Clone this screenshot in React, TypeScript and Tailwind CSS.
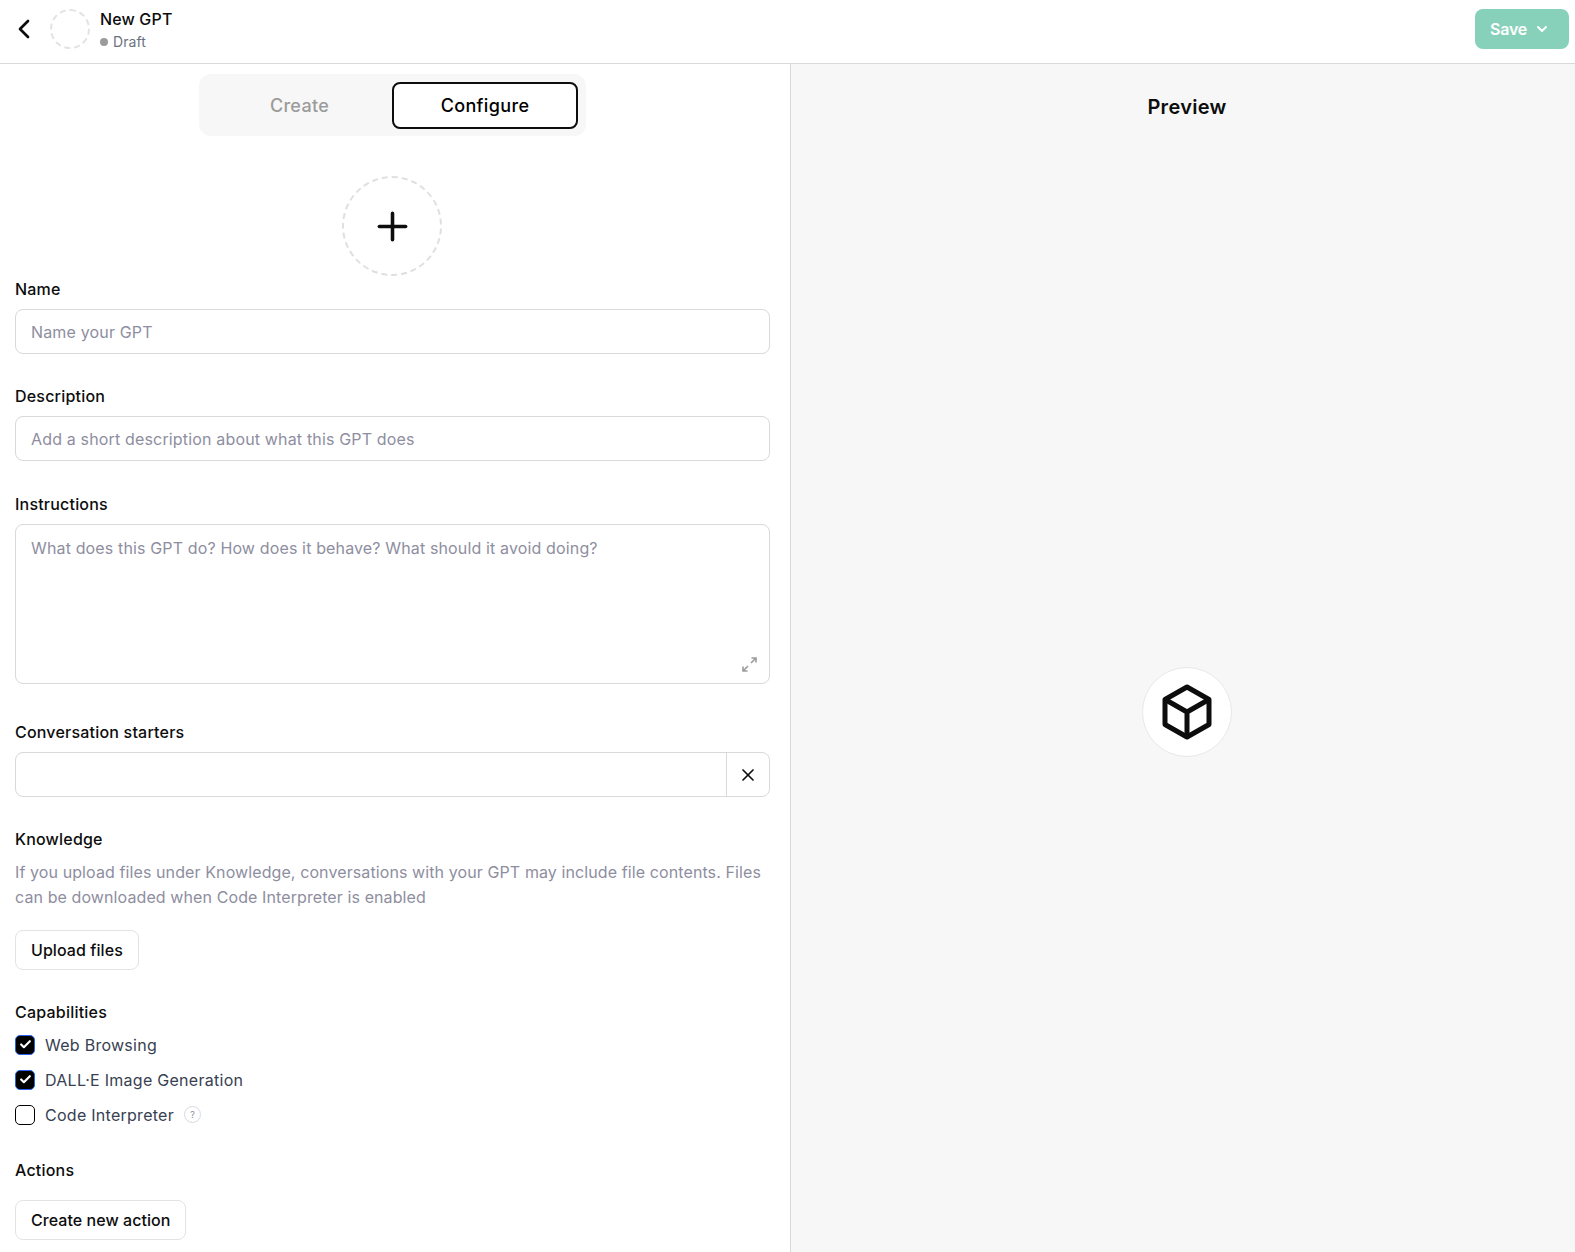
import React from 'react';
import { ChevronLeft, ChevronDown, Plus, X, Check } from 'lucide-react';

const font = "font-['Inter','Liberation_Sans',sans-serif]";

function Label({ children }: { children: React.ReactNode }) {
  return <div className="text-[16px] leading-[24px] font-medium tracking-[0.2px] text-[#0d0d0d] mb-2">{children}</div>;
}

function TextBox({ placeholder }: { placeholder: string }) {
  return (
    <div className="h-[45px] rounded-lg border border-[#d9d9d9] px-[15px] flex items-center text-[16px] tracking-[0.16px] text-[#8e8ea0]">
      {placeholder}
    </div>
  );
}

function Capability({ label, checked, help }: { label: string; checked: boolean; help?: boolean }) {
  return (
    <div className="h-[35px] flex items-center">
      {checked ? (
        <span className="w-5 h-5 rounded-[5px] bg-black border border-[#2563eb] flex items-center justify-center">
          <Check size={13} color="#ffffff" strokeWidth={4} />
        </span>
      ) : (
        <span className="w-5 h-5 rounded-[5px] bg-white border border-black" />
      )}
      <span className="ml-[10px] text-[16px] tracking-[0.27px] text-[#374151]">{label}</span>
      {help && (
        <span className="ml-[10px] w-[17px] h-[17px] rounded-full border border-[#d9d9e3] flex items-center justify-center text-[9px] text-[#8e8ea0]">
          ?
        </span>
      )}
    </div>
  );
}

export default function App() {
  return (
    <div className={`${font} w-[1575px] h-[1252px] overflow-hidden flex flex-col bg-white`}>
      <header className="h-[64px] shrink-0 border-b border-[#d9d9d9] flex items-center pl-[8px] pr-[6px] pb-[6px]">
        <ChevronLeft size={32} strokeWidth={2} color="#0d0d0d" />
        <div className="ml-[10px] w-10 h-10 rounded-full border-2 border-dashed border-[#e3e3e3]" />
        <div className="ml-[10px] pt-[4px]">
          <div className="text-[16px] leading-[20px] font-medium tracking-[0.15px] text-[#0d0d0d]">New GPT</div>
          <div className="mt-[3px] flex items-center text-[14px] leading-[20px] tracking-[0.1px] text-[#6b7280]">
            <span className="w-2 h-2 rounded-full bg-[#9b9b9b] mr-[5px]" />
            Draft
          </div>
        </div>
        <button className="ml-auto w-[94px] h-[40px] rounded-lg bg-[#87d1ba] flex items-center justify-center gap-[7px] pr-[4px] text-[16px] font-semibold tracking-[-0.2px] text-white">
          Save
          <ChevronDown size={16} strokeWidth={3} />
        </button>
      </header>

      <div className="flex-1 flex min-h-0">
        <div className="w-[791px] shrink-0 border-r border-[#d9d9d9] pl-[15px] pr-[20px] pt-[10px]">
          <div className="w-[387px] h-[62px] mx-auto rounded-xl bg-[#f7f7f7] flex items-center pl-[8px]">
            <div className="w-[185px] text-center text-[18px] font-medium tracking-[0.3px] text-[#9b9b9b]">Create</div>
            <div className="w-[186px] h-[47px] rounded-lg bg-white border-2 border-[#0d0d0d] flex items-center justify-center text-[18px] font-medium tracking-[0.35px] text-black">
              Configure
            </div>
          </div>

          <div className="mt-[40px] ml-[327px] w-[100px] h-[100px] rounded-full border-2 border-dashed border-[#e0e0e0] flex items-center justify-center">
            <Plus size={45} strokeWidth={1.9} color="#0d0d0d" />
          </div>

          <div className="mt-[1px]">
            <Label>Name</Label>
            <TextBox placeholder="Name your GPT" />
          </div>

          <div className="mt-[30px]">
            <Label>Description</Label>
            <TextBox placeholder="Add a short description about what this GPT does" />
          </div>

          <div className="mt-[31px]">
            <Label>Instructions</Label>
            <div className="relative h-[160px] rounded-lg border border-[#d9d9d9] px-[15px] py-[11px] text-[16px] leading-[24px] tracking-[0.14px] text-[#8e8ea0]">
              What does this GPT do? How does it behave? What should it avoid doing?
              <svg className="absolute right-[12px] bottom-[11px]" width="15" height="15" viewBox="0 0 15 15" fill="none" stroke="#9b9b9b" strokeWidth="1.6">
                <path d="M9 6 L14 1 M9.5 1 H14 V5.5 M6 9 L1 14 M1 9.5 V14 H5.5" />
              </svg>
            </div>
          </div>

          <div className="mt-[36px]">
            <Label>Conversation starters</Label>
            <div className="h-[45px] rounded-lg border border-[#d9d9d9] flex">
              <div className="flex-1" />
              <div className="w-[43px] border-l border-[#d9d9d9] flex items-center justify-center">
                <X size={20} strokeWidth={2} color="#0d0d0d" />
              </div>
            </div>
          </div>

          <div className="mt-[30px]">
            <Label>Knowledge</Label>
            <p className="mt-[9px] text-[16px] leading-[25px] tracking-[0.1px] text-[#8e8ea0]">
              If you upload files under Knowledge, conversations with your GPT may include file contents. Files can be downloaded when Code Interpreter is enabled
            </p>
            <button className="mt-[20px] block h-[40px] px-[15px] rounded-lg border border-[#e3e3e3] text-[16px] font-medium tracking-[0.07px] text-[#0d0d0d]">
              Upload files
            </button>
          </div>

          <div className="mt-[30px]">
            <div className="text-[16px] leading-[24px] font-medium tracking-[0.22px] text-[#0d0d0d]">Capabilities</div>
            <div className="mt-[3px]">
              <Capability label="Web Browsing" checked />
              <Capability label="DALL·E Image Generation" checked />
              <Capability label="Code Interpreter" checked={false} help />
            </div>
          </div>

          <div className="mt-[26px]">
            <Label>Actions</Label>
            <button className="mt-[18px] block h-[40px] px-[15px] rounded-lg border border-[#e3e3e3] text-[16px] font-medium tracking-[0.05px] text-[#0d0d0d]">
              Create new action
            </button>
          </div>
        </div>

        <div className="flex-1 bg-[#f7f7f7] flex flex-col items-center pl-[8px]">
          <div className="mt-[27px] text-[20px] leading-[32px] font-semibold tracking-[0.3px] text-[#0d0d0d]">Preview</div>
          <div className="mt-[544px] w-[90px] h-[90px] rounded-full bg-white border border-[#e8e8e8] flex items-center justify-center">
            <svg width="52" height="56" viewBox="0 0 52 56" fill="none" stroke="#0d0d0d" strokeWidth="5" strokeLinejoin="round" strokeLinecap="round">
              <path d="M26 3 L48 15.5 V40.5 L26 53 L4 40.5 V15.5 Z" />
              <path d="M5 16 L26 28 L47 16 M26 28 V52" />
            </svg>
          </div>
        </div>
      </div>
    </div>
  );
}
